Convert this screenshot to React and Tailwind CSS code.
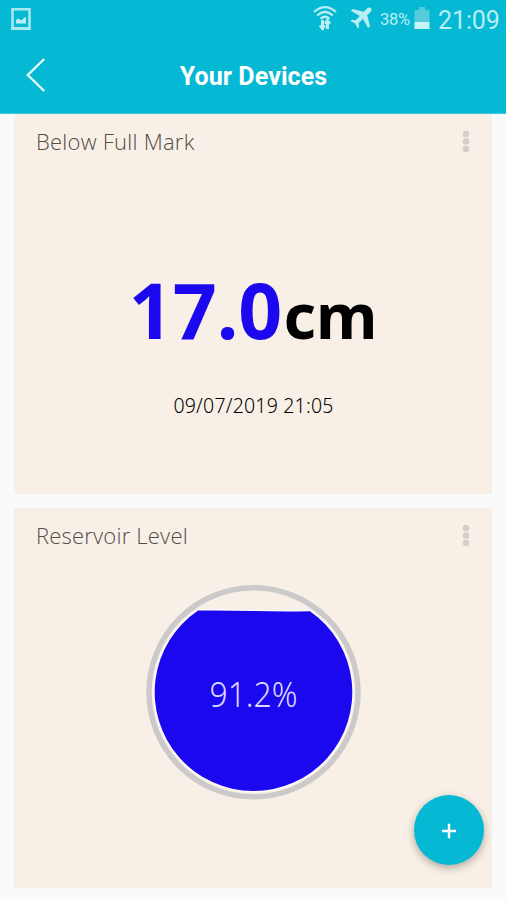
function StatusBar() {
  return (
    <div className="flex h-[38px] items-center pl-[11px] pr-[7px] font-['Roboto',sans-serif] text-[#b8edf4]">
      <svg className="h-[22px] w-5" viewBox="0 0 20 22" fill="none">
        <path d="M1.500 1.200h17v19h-17z" stroke="#a8e8f1" strokeWidth="2.600" />
        <path d="M0 19h20v3H0z" fill="#a8e8f1" />
        <path d="M5 15.500v-3.200l2-2 2.500 2 1.500-.5 3-2.600 1-.2v6.500z" fill="#b8edf4" />
      </svg>
      <svg className="ml-auto h-[26px] w-6 -translate-y-px" viewBox="0 0 24 26" fill="none" stroke="#b8edf4" strokeWidth="2.200">
        <path d="M1 7Q12-2.800 23 7" />
        <path d="M4.200 10.500Q12 3.500 19.800 10.500" />
        <path d="M7.500 13.800Q12 9.700 16.500 13.800" />
        <path d="M9.500 15v10M14.500 24V15" strokeWidth="3" />
        <path d="M6.800 20.500l2.700 3.500 2.700-3.500M11.800 18.500l2.700-3.500 2.700 3.500" />
      </svg>
      <svg className="ml-[13px] h-[22px] w-[22px] -translate-y-px" viewBox="0 0 22 22" fill="#b8edf4">
        <path d="M21 1c-1-1-3-.6-4 .4L13.800 4.700 2.600 1.900.8 3.700l8.900 5.200L5.500 13.200l-3.800-.4L.4 14.100l4.800 2.500 2.500 4.800 1.400-1.300-.4-3.800 4.300-4.200 5.100 8.900 1.900-1.800L17.200 8.100l3.300-3.200c1-1 1.400-3 .5-3.900z" />
      </svg>
      <span className="ml-[8px] w-8 translate-y-px whitespace-nowrap text-[16.5px] tracking-[-0.3px]">38%</span>
      <svg className="ml-[2px] h-6 w-4" viewBox="0 0 16 24">
        <path d="M5 0h6v3h4.500v12H.5V3H5z" fill="#55cbdc" />
        <path d="M.5 15h15v7H.5z" fill="#c8f4f8" />
      </svg>
      <span className="ml-[8px] w-[61px] translate-y-px whitespace-nowrap text-[25px] leading-none tracking-[-0.1px]">21:09</span>
    </div>
  );
}

function CardHeader({ title, tracking }) {
  return (
    <div className="flex h-14 items-center justify-between pl-[22px] pr-[22px]">
      <h2 className={`-translate-y-px text-[22px] font-light text-[#514d48] ${tracking}`}>{title}</h2>
      <svg className="h-6 w-2" viewBox="0 0 8 24" fill="#d3cfca">
        <circle cx="4" cy="4" r="3.300" />
        <circle cx="4" cy="11.500" r="3.300" />
        <circle cx="4" cy="19" r="3.300" />
      </svg>
    </div>
  );
}

function Gauge() {
  return (
    <svg className="mx-auto mt-[20px] block h-[216px] w-[216px] translate-x-px" viewBox="0 0 216 216">
      <circle cx="107.500" cy="108.300" r="104.500" fill="#f8f0e6" stroke="#cbc9c9" strokeWidth="5.500" />
      <path d="M52 26.500 Q80 26.200 108 27 T164 27.200 A98.800 98.800 0 1 1 52 26.500Z" fill="#1b08ee" stroke="#fffafa" strokeWidth="2.500" paintOrder="stroke" />
      <text x="107.500" y="123" textAnchor="middle" fill="#dcd8ff" fontFamily="Noto Sans, Open Sans, sans-serif" fontSize="34" fontWeight="300" textLength="88" lengthAdjust="spacingAndGlyphs">
        91.2%
      </text>
    </svg>
  );
}

export default function App() {
  return (
    <div className="relative h-[900px] w-[506px] overflow-hidden bg-[#fafafa] font-['Open_Sans',sans-serif]">
      <header className="h-[114px] border-b border-[#43c6d8] bg-[#05b9d4]">
        <StatusBar />
        <div className="grid h-[75px] grid-cols-[80px_1fr_80px] items-center">
          <svg className="ml-[26px] h-9 w-5 -translate-y-px" viewBox="0 0 20 36" fill="none" stroke="#e5fafd" strokeWidth="2.400">
            <path d="M18.200 2 1.800 18l16.400 16" />
          </svg>
          <h1 className="translate-x-[0.5px] translate-y-px text-center font-['Roboto',sans-serif] text-[25px] font-bold tracking-[0.1px] text-white">Your Devices</h1>
        </div>
      </header>
      <main className="flex flex-col gap-[14px] px-[14px]">
        <section className="h-[380px] bg-[#f8f0e6]">
          <CardHeader title="Below Full Mark" tracking="tracking-[0.24px]" />
          <div className="mt-[84px] flex items-baseline justify-center gap-px whitespace-nowrap font-['Noto_Sans','Open_Sans',sans-serif] font-bold leading-[112px]">
            <span className="text-[77px] text-[#1b08ee]">17.0</span>
            <span className="text-[63px] text-black">cm</span>
          </div>
          <p className="mt-[21px] translate-x-[0.5px] text-center font-['Noto_Sans','Open_Sans',sans-serif] text-[19.5px] font-light leading-7 tracking-[0.2px] text-black">09/07/2019 21:05</p>
        </section>
        <section className="h-[380px] bg-[#f8f0e6]">
          <CardHeader title="Reservoir Level" tracking="tracking-[0.2px]" />
          <Gauge />
        </section>
      </main>
      <button className="absolute left-[414px] top-[795px] flex h-[70px] w-[70px] items-center justify-center rounded-full bg-[#05b9d4] shadow-[0_3px_8px_rgba(0,0,0,0.3)]">
        <svg className="h-4 w-4 translate-y-px" viewBox="0 0 16 16" stroke="white" strokeWidth="2.400">
          <path d="M8 .8v14.400M1 8h14" />
        </svg>
      </button>
    </div>
  );
}
